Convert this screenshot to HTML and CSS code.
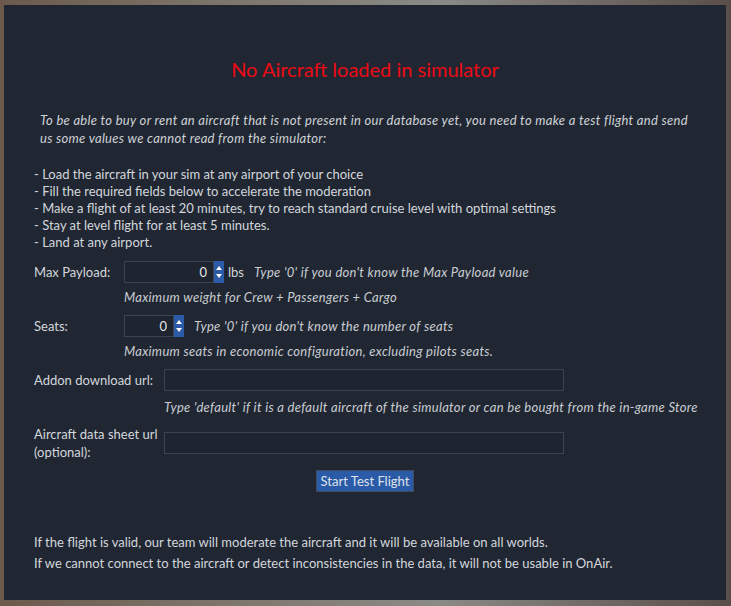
FILE: index.html
```html
<!DOCTYPE html>
<html lang="en">
<head>
    <meta charset="UTF-8">
    <meta name="viewport" content="width=device-width, initial-scale=1.0">
    <title>OnAir - Test Flight</title>
    <link rel="stylesheet" href="styles.css">
</head>
<body>
    <div class="panel">
        <h1 class="title">No Aircraft loaded in simulator</h1>

        <p class="intro">To be able to buy or rent an aircraft that is not present in our database yet, you need to make a test flight and send us some values we cannot read from the simulator:</p>

        <ul class="steps">
            <li>- Load the aircraft in your sim at any airport of your choice</li>
            <li>- Fill the required fields below to accelerate the moderation</li>
            <li>- Make a flight of at least 20 minutes, try to reach standard cruise level with optimal settings</li>
            <li>- Stay at level flight for at least 5 minutes.</li>
            <li>- Land at any airport.</li>
        </ul>

        <div class="row first">
            <label class="label short">Max Payload:</label>
            <div class="spin wide">
                <input class="num" type="text" value="0">
                <span class="arrows"><span class="up"></span><span class="down"></span></span>
            </div>
            <span class="unit">lbs</span>
            <span class="hint">Type '0' if you don't know the Max Payload value</span>
        </div>
        <div class="hint sub short-offset">Maximum weight for Crew + Passengers + Cargo</div>

        <div class="row">
            <label class="label short">Seats:</label>
            <div class="spin narrow">
                <input class="num" type="text" value="0">
                <span class="arrows"><span class="up"></span><span class="down"></span></span>
            </div>
            <span class="hint">Type '0' if you don't know the number of seats</span>
        </div>
        <div class="hint sub short-offset">Maximum seats in economic configuration, excluding pilots seats.</div>

        <div class="row">
            <label class="label long">Addon download url:</label>
            <input class="text" type="text">
        </div>
        <div class="hint sub long-offset">Type 'default' if it is a default aircraft of the simulator or can be bought from the in-game Store</div>

        <div class="row">
            <label class="label long two-line">Aircraft data sheet url (optional):</label>
            <input class="text" type="text">
        </div>

        <div class="actions">
            <button class="start">Start Test Flight</button>
        </div>

        <div class="footer">
            <p>If the flight is valid, our team will moderate the aircraft and it will be available on all worlds.</p>
            <p>If we cannot connect to the aircraft or detect inconsistencies in the data, it will not be usable in OnAir.</p>
        </div>
    </div>
</body>
</html>
```

FILE: styles.css
```css
/* Reset */
* {
    margin: 0;
    padding: 0;
    box-sizing: border-box;
}

body {
    font-family: Lato, 'Open Sans', sans-serif;
    font-size: 13px;
    color: #d3d6db;
    width: 731px;
    height: 606px;
    overflow: hidden;
    background: linear-gradient(90deg, #6b5a4c 0%, #7d756b 30%, #8a8a86 60%, #5a4e4a 100%);
    padding: 5px 5px 6px 4px;
}

.panel {
    height: 595px;
    background-color: #202733;
    padding: 52px 30px 0 30px;
}

.title {
    font-size: 20px;
    font-weight: normal;
    line-height: 24px;
    color: #ec0a14;
    text-align: center;
}

.intro {
    margin: 30px 6px 0 6px;
    font-style: italic;
    letter-spacing: 0.3px;
    line-height: 18px;
    color: #cfd2d6;
}

.steps {
    list-style: none;
    margin-top: 19px;
    line-height: 17px;
}

/* Form rows */
.row {
    display: flex;
    align-items: center;
    margin-top: 9px;
}

.row.first {
    margin-top: 10px;
}

.label {
    flex-shrink: 0;
}

.label.short {
    width: 90px;
}

.label.long {
    width: 130px;
}

.two-line {
    line-height: 18px;
    padding-right: 6px;
}

.spin {
    display: flex;
    height: 22px;
}

.spin.wide {
    width: 100px;
}

.spin.narrow {
    width: 60px;
}

.num {
    flex: 1;
    min-width: 0;
    height: 22px;
    border: 1px solid #3a4550;
    background-color: #1e2530;
    color: #e6e8ea;
    font-family: inherit;
    font-size: 13px;
    text-align: right;
    padding-right: 6px;
    outline: none;
}

.arrows {
    width: 10px;
    background-color: #2b5ba9;
    display: flex;
    flex-direction: column;
    justify-content: center;
    align-items: center;
    gap: 4px;
}

.up,
.down {
    width: 0;
    height: 0;
    border-left: 3px solid transparent;
    border-right: 3px solid transparent;
}

.up {
    border-bottom: 4px solid #fff;
}

.down {
    border-top: 4px solid #fff;
}

.unit {
    margin-left: 4px;
}

.hint {
    font-style: italic;
    letter-spacing: 0.3px;
    white-space: nowrap;
    color: #cacdd2;
    margin-left: 10px;
    line-height: 17px;
}

.hint.sub {
    margin-top: 6px;
}

.short-offset {
    margin-left: 90px !important;
}

.long-offset {
    margin-left: 130px !important;
    margin-top: 8px !important;
}

.text {
    width: 400px;
    height: 22px;
    border: 1px solid #3a4550;
    background-color: #1e2530;
    color: #e6e8ea;
    outline: none;
}

.actions {
    display: flex;
    justify-content: center;
    margin-top: 9px;
}

.start {
    font-family: inherit;
    font-size: 13px;
    color: #dfe4ec;
    background-color: #2b5aa6;
    border: 1px solid #3e4c62;
    padding: 0 4px;
    height: 22px;
}

.footer {
    margin-top: 40px;
    line-height: 21px;
}
```
